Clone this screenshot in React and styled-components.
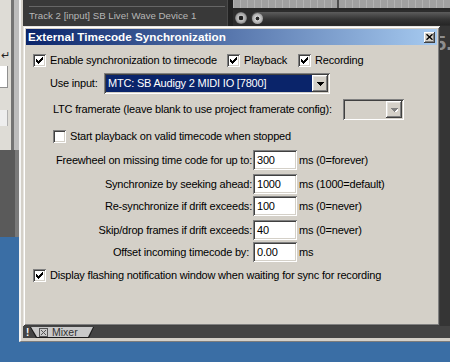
import React from 'react';
import styled, { createGlobalStyle } from 'styled-components';

const Global = createGlobalStyle`
  html, body { margin: 0; padding: 0; }
  body {
    width: 450px; height: 362px; overflow: hidden;
    background: #3a6ea5;
    font-family: "Liberation Sans", Arial, sans-serif;
  }
  * { box-sizing: border-box; }
`;

const Desktop = styled.div`
  position: relative;
  width: 450px;
  height: 362px;
  overflow: hidden;
  background: #3a6ea5;
`;

/* ---------- partial window on the left ---------- */
const LeftWindow = styled.div`
  position: absolute;
  left: 0;
  top: 0;
  width: 19px;
  height: 237px;
  display: flex;
  flex-direction: column;
`;
const LeftTop = styled.div`
  height: 150px;
  display: flex;
`;
const LeftPane = styled.div`
  width: 11px;
  background: #dedcd6;
  display: flex;
  flex-direction: column;
  padding-top: 50px;
  gap: 6px;
`;
const LeftArrow = styled.div`
  height: 10px;
  font-size: 11px;
  line-height: 10px;
  color: #222;
  padding-left: 1px;
`;
const LeftField = styled.div`
  width: 8px;
  height: 22px;
  background: #fff;
  border-right: 1px solid #909090;
  border-bottom: 1px solid #909090;
`;
const LeftBox = styled.div`
  width: 8px;
  height: 16px;
  margin-top: 16px;
  background: #eeeeee;
  border-right: 1px solid #b0b0b0;
`;
const LeftDivider = styled.div`
  width: 3px;
  background: #747474;
`;
const LeftFrame = styled.div`
  flex: 1;
  background: #bdbdbd;
`;
const LeftBottom = styled.div`
  flex: 1;
  background: #5a5a5a;
  border-right: 4px solid #7a7a7a;
`;

/* ---------- main (REAPER) window ---------- */
const MainWindow = styled.div`
  position: absolute;
  left: 19px;
  top: 0;
  right: 0;
  height: 342px;
  background: #d4d0c8;
  border-left: 2px solid #f4f4f4;
  border-bottom: 1px solid #7c7c7c;
  padding: 0 0 3px 2px;
`;
const MainInner = styled.div`
  height: 100%;
  display: flex;
  flex-direction: column;
  background: #353535;
  overflow: hidden;
`;
const TopStrip = styled.div`
  height: 26px;
  display: flex;
`;
const TrackPanel = styled.div`
  width: 204px;
  background: #393939;
  padding: 6px 2px 0 6px;
  display: flex;
  flex-direction: column;
`;
const TrackRule = styled.div`
  height: 1px;
  background: #666;
`;
const TrackName = styled.div`
  margin-top: 3px;
  font-size: 9.7px;
  line-height: 12px;
  color: #b6b6b6;
  white-space: nowrap;
`;
const PanelDivider = styled.div`
  width: 6px;
  background: #222;
  border-left: 1px solid #4a4a4a;
`;
const Arrange = styled.div`
  flex: 1;
  display: flex;
  flex-direction: column;
`;
const Grid = styled.div`
  height: 8px;
  background-color: #a0a0a0;
  background-image:
    linear-gradient(90deg, transparent 104px, #4e4e4e 104px, #4e4e4e 106px, transparent 106px),
    repeating-linear-gradient(90deg, #b2b2b2 0 1px, transparent 1px 7px);
`;
const ArrangeGap = styled.div`
  height: 2px;
  background: #262626;
`;
const ScrollRow = styled.div`
  height: 16px;
  background: #2c2c2c;
  display: flex;
  align-items: center;
  padding-left: 2px;
`;
const ZoomBtn = styled.div`
  width: 12px;
  height: 12px;
  border-radius: 50%;
  background: radial-gradient(circle, #1e1e1e 0 2px, #c4c4c4 2.6px, #9a9a9a 5px, #6a6a6a 6px);
`;
const ScrollTrack = styled.div`
  flex: 1;
  height: 13px;
  margin-left: 4px;
  border-radius: 7px 0 0 7px;
  background: linear-gradient(#5c5c5c, #353535 55%, #262626);
  display: flex;
  align-items: center;
  padding-left: 1px;
`;
const Knob = styled.div`
  width: 11px;
  height: 11px;
  border-radius: 50%;
  background: radial-gradient(circle, #2a2a2a 0 1.6px, #d2d2d2 2.2px, #9c9c9c 5.5px);
`;
const Workspace = styled.div`
  flex: 1;
  display: flex;
  justify-content: flex-end;
  align-items: flex-start;
  padding-top: 6px;
`;
const TimeReadout = styled.div`
  font-size: 21px;
  line-height: 21px;
  font-weight: bold;
  color: #8e8e8e;
  margin-right: -2px;
`;
const DockBar = styled.div`
  height: 12px;
  background: #444;
  display: flex;
  align-items: flex-end;
`;
const Bang = styled.div`
  margin-left: 3px;
  width: 3px;
  font-size: 10px;
  font-weight: bold;
  line-height: 11px;
  color: #fff;
  align-self: center;
`;
const TabEdge = styled.div`
  margin-left: 1px;
  width: 64px;
  height: 11px;
  background: #1c1c1c;
  clip-path: polygon(0 0, 100% 0, calc(100% - 5px) 100%, 6px 100%);
`;
const TabFace = styled.div`
  width: 100%;
  height: 100%;
  background: #c9c9c9;
  clip-path: polygon(1px 0, calc(100% - 1px) 0, calc(100% - 6px) calc(100% - 1px), 7px calc(100% - 1px));
  display: flex;
  align-items: center;
  padding-left: 9px;
  gap: 4px;
  font-size: 10.5px;
  line-height: 11px;
  color: #333;
`;

/* ---------- dialog ---------- */
const Dialog = styled.div`
  position: absolute;
  left: 23px;
  top: 26px;
  width: 417px;
  height: 300px;
  background: #d4d0c8;
  padding: 3px;
  box-shadow:
    inset 1px 1px #e8e6e2,
    inset -1px -1px #404040,
    inset 2px 2px #ffffff,
    inset -2px -2px #808080;
  display: flex;
  flex-direction: column;
`;
const TitleBar = styled.div`
  height: 16px;
  background: linear-gradient(90deg, #0a246a, #a6caf0);
  display: flex;
  align-items: center;
  justify-content: space-between;
  padding: 0 2px;
`;
const TitleText = styled.div`
  color: #fff;
  font-weight: bold;
  font-size: 11.7px;
  line-height: 14px;
  white-space: nowrap;
`;
const CloseButton = styled.div`
  width: 11px;
  height: 11px;
  background: #d4d0c8;
  box-shadow:
    inset -1px -1px #404040,
    inset 1px 1px #ffffff,
    inset -2px -2px #808080;
  display: flex;
  align-items: center;
  justify-content: center;
`;
const Body = styled.div`
  display: flex;
  flex-direction: column;
  padding-top: 5px;
`;
const Row = styled.div`
  display: flex;
  align-items: center;
  height: ${p => p.$h || 21}px;
  margin-top: ${p => p.$mt || 0}px;
  padding-left: ${p => p.$pl || 0}px;
`;
const Text = styled.span`
  font-size: 11px;
  letter-spacing: -0.2px;
  color: #000;
  white-space: nowrap;
  line-height: 13px;
`;
const CheckItem = styled.label`
  display: flex;
  align-items: center;
  gap: 4px;
  width: ${p => (p.$w ? `${p.$w}px` : 'auto')};
  flex: none;
`;
const Box = styled.span`
  width: 13px;
  height: 13px;
  flex: none;
  background: #fff;
  box-shadow:
    inset 1px 1px #808080,
    inset -1px -1px #ffffff,
    inset 2px 2px #404040,
    inset -2px -2px #d4d0c8;
  display: flex;
  align-items: center;
  justify-content: center;
`;
const FieldLabel = styled(Text)`
  width: ${p => p.$w}px;
  flex: none;
  text-align: ${p => p.$align || 'left'};
  padding-right: ${p => p.$pr || 0}px;
`;
const Combo = styled.div`
  width: ${p => p.$w}px;
  height: 21px;
  flex: none;
  background: ${p => (p.$disabled ? '#d4d0c8' : '#fff')};
  padding: 2px;
  box-shadow:
    inset 1px 1px #808080,
    inset -1px -1px #ffffff,
    inset 2px 2px #404040,
    inset -2px -2px #d4d0c8;
  display: flex;
`;
const ComboValue = styled.div`
  flex: 1;
  background: #0a246a;
  color: #fff;
  font-size: 11px;
  letter-spacing: -0.2px;
  line-height: 17px;
  padding-left: 2px;
  white-space: nowrap;
  overflow: hidden;
`;
const ComboEmpty = styled.div`
  flex: 1;
`;
const DropButton = styled.div`
  width: 16px;
  flex: none;
  background: #d4d0c8;
  box-shadow:
    inset -1px -1px #404040,
    inset 1px 1px #ffffff,
    inset -2px -2px #808080,
    inset 2px 2px #e4e2de;
  display: flex;
  align-items: center;
  justify-content: center;
`;
const Field = styled.div`
  width: 44px;
  height: 20px;
  flex: none;
  margin-left: 1px;
  background: #fff;
  padding: 2px 0 0 4px;
  box-shadow:
    inset 1px 1px #808080,
    inset -1px -1px #ffffff,
    inset 2px 2px #404040,
    inset -2px -2px #d4d0c8;
  font-size: 11px;
  letter-spacing: -0.2px;
  line-height: 16px;
  color: #000;
`;
const Suffix = styled(Text)`
  margin-left: 2px;
`;

const Check = () => (
  <svg width="7" height="7" viewBox="0 0 7 7" shapeRendering="crispEdges">
    <path d="M6 0h1v3h-1v1h-1v1h-1v1h-1v1h-1v-1h-1v-1h-1v-3h1v1h1v1h1v-1h1v-1h1z" fill="#000" />
  </svg>
);

const CheckBox = ({ checked, w, children }) => (
  <CheckItem $w={w}>
    <Box>{checked && <Check />}</Box>
    <Text>{children}</Text>
  </CheckItem>
);

const Arrow = ({ disabled }) => (
  <svg width="7" height="4" viewBox="0 0 7 4" shapeRendering="crispEdges">
    {disabled && <path d="M1 1h7l-3.5 4z" fill="#fff" />}
    <path d="M0 0h7l-3.5 4z" fill={disabled ? '#808080' : '#000'} />
  </svg>
);

const CloseGlyph = () => (
  <svg width="7" height="6" viewBox="0 0 7 6">
    <path d="M0.5 0.3 L6.5 5.7 M6.5 0.3 L0.5 5.7" stroke="#000" strokeWidth="1.4" />
  </svg>
);

const TabGlyph = () => (
  <svg width="9" height="9" viewBox="0 0 9 9">
    <rect x="0.5" y="0.5" width="8" height="8" fill="none" stroke="#555" />
    <path d="M2 2 L7 7 M7 2 L2 7" stroke="#555" strokeWidth="1" />
  </svg>
);

const timing = [
  { label: 'Freewheel on missing time code for up to:', value: '300', suffix: 'ms (0=forever)', mt: 3 },
  { label: 'Synchronize by seeking ahead:', value: '1000', suffix: 'ms (1000=default)', mt: 4 },
  { label: 'Re-synchronize if drift exceeds:', value: '100', suffix: 'ms (0=never)', mt: 2 },
  { label: 'Skip/drop frames if drift exceeds:', value: '40', suffix: 'ms (0=never)', mt: 4 },
  { label: 'Offset incoming timecode by:', value: '0.00', suffix: 'ms', mt: 2, pr: 3 },
];

export default function App() {
  return (
    <>
      <Global />
      <Desktop>
        <LeftWindow>
          <LeftTop>
            <LeftPane>
              <LeftArrow>↵</LeftArrow>
              <LeftField />
              <LeftBox />
            </LeftPane>
            <LeftDivider />
            <LeftFrame />
          </LeftTop>
          <LeftBottom />
        </LeftWindow>

        <MainWindow>
          <MainInner>
            <TopStrip>
              <TrackPanel>
                <TrackRule />
                <TrackName>Track 2 [input] SB Live! Wave Device 1</TrackName>
              </TrackPanel>
              <PanelDivider />
              <Arrange>
                <Grid />
                <ArrangeGap />
                <ScrollRow>
                  <ZoomBtn />
                  <ScrollTrack>
                    <Knob />
                  </ScrollTrack>
                </ScrollRow>
              </Arrange>
            </TopStrip>
            <Workspace>
              <TimeReadout>5.</TimeReadout>
            </Workspace>
            <DockBar>
              <Bang>!</Bang>
              <TabEdge>
                <TabFace>
                  <TabGlyph />
                  Mixer
                </TabFace>
              </TabEdge>
            </DockBar>
          </MainInner>
        </MainWindow>

        <Dialog>
          <TitleBar>
            <TitleText>External Timecode Synchronization</TitleText>
            <CloseButton>
              <CloseGlyph />
            </CloseButton>
          </TitleBar>
          <Body>
            <Row $pl={7}>
              <CheckBox checked w={194}>Enable synchronization to timecode</CheckBox>
              <CheckBox checked w={71}>Playback</CheckBox>
              <CheckBox checked>Recording</CheckBox>
            </Row>
            <Row $mt={2} $pl={24}>
              <FieldLabel $w={54}>Use input:</FieldLabel>
              <Combo $w={226}>
                <ComboValue>MTC: SB Audigy 2 MIDI IO [7800]</ComboValue>
                <DropButton>
                  <Arrow />
                </DropButton>
              </Combo>
            </Row>
            <Row $mt={5} $pl={27}>
              <FieldLabel $w={290}>LTC framerate (leave blank to use project framerate config):</FieldLabel>
              <Combo $w={61} $disabled>
                <ComboEmpty />
                <DropButton>
                  <Arrow disabled />
                </DropButton>
              </Combo>
            </Row>
            <Row $mt={6} $pl={27}>
              <CheckBox>Start playback on valid timecode when stopped</CheckBox>
            </Row>
            {timing.map(t => (
              <Row key={t.label} $h={20} $mt={t.mt}>
                <FieldLabel $w={226} $align="right" $pr={t.pr}>{t.label}</FieldLabel>
                <Field>{t.value}</Field>
                <Suffix>{t.suffix}</Suffix>
              </Row>
            ))}
            <Row $mt={3} $pl={7}>
              <CheckBox checked>Display flashing notification window when waiting for sync for recording</CheckBox>
            </Row>
          </Body>
        </Dialog>
      </Desktop>
    </>
  );
}
